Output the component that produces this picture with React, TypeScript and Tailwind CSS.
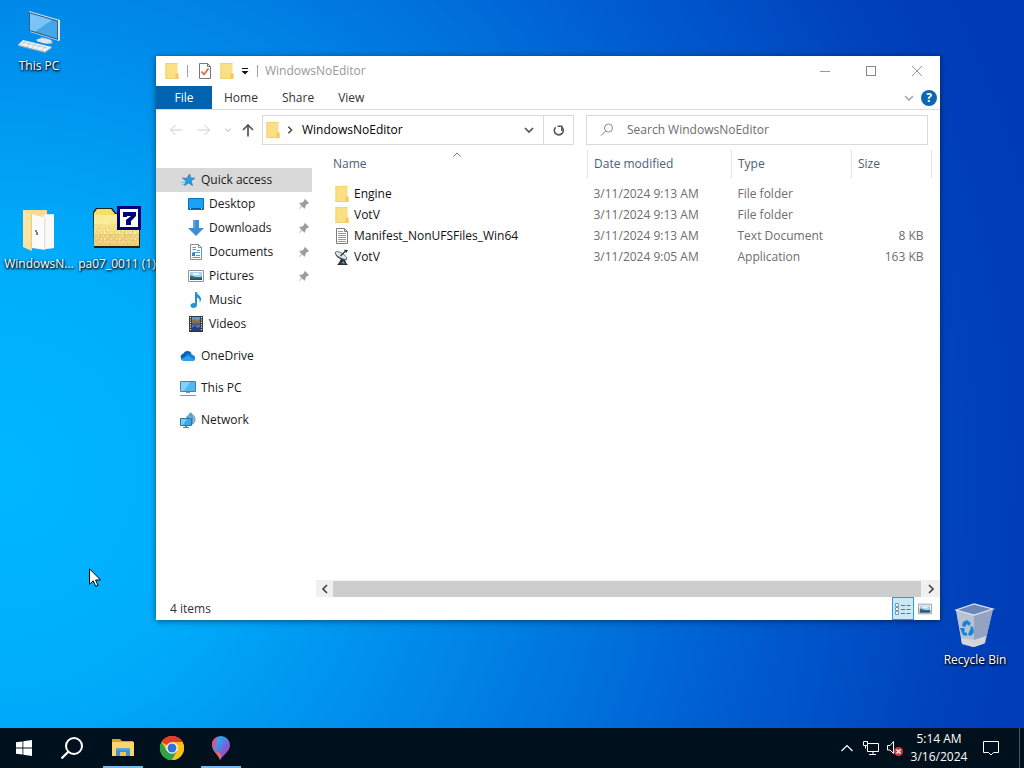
import React, { useState } from 'react';

interface IconProps {
  className?: string;
}

interface NavItem {
  label: string;
  Icon: React.FC<IconProps>;
  pinned?: boolean;
}

interface FileRow {
  name: string;
  modified: string;
  type: string;
  size: string;
  Icon: React.FC<IconProps>;
}

/* ---------- Small icons ---------- */

const FolderIcon: React.FC<IconProps> = ({ className = 'size-4' }) => (
  <svg viewBox="0 0 16 16" className={className} aria-hidden="true">
    <path d="M1.500 0h12v10l1 1v5h-13z" fill="#fadf83" />
    <path d="M1.500 0h12v1h-12z" fill="#f5d36e" />
    <path d="M1.500 0h1v16h-1z" fill="#f2cf70" />
    <path d="M11.500 10.500h2l1 1V16h-3z" fill="#f2c95a" />
    <path d="M1.500 15h13v1h-13z" fill="#f3d06d" />
  </svg>
);

const PropertiesIcon: React.FC<IconProps> = ({ className = 'size-4' }) => (
  <svg viewBox="0 0 16 16" className={className} fill="none" aria-hidden="true">
    <path d="M2.500.5h8l3 3v12h-11z" fill="#fff" stroke="#777" />
    <path d="M10.500.5v3h3" stroke="#777" />
    <path d="m4.500 8.500 2.500 3 4.500-6" stroke="#d9683c" strokeWidth="1.700" />
  </svg>
);

const TextFileIcon: React.FC<IconProps> = ({ className = 'size-4' }) => (
  <svg viewBox="0 0 16 16" className={className} fill="none" aria-hidden="true">
    <path d="M2.500.5h8l3 3v12h-11z" fill="#fdfdfd" stroke="#7d7d7d" />
    <path d="M10.500.5v3h3" stroke="#7d7d7d" />
    <path d="M4 3.500h5M4 5.500h8M4 7.500h8M4 9.500h8M4 11.500h8M4 13.500h8" stroke="#9b9b9b" />
  </svg>
);

const DishIcon: React.FC<IconProps> = ({ className = 'size-4' }) => (
  <svg viewBox="0 0 16 16" className={className} aria-hidden="true">
    <path d="M7.500 8 5.500 13 3 16h11l-1.800-2-1.700-5z" fill="#26333f" />
    <path d="M1 3.500C1.500 8 6 11.500 13 10.500L12 8z" fill="#2b3a47" />
    <ellipse cx="7" cy="6.500" rx="6.600" ry="2.400" transform="rotate(30 7 6.500)" fill="#e1e7eb" stroke="#4a5b69" strokeWidth=".8" />
    <path d="M6.500 7 11.500 2" stroke="#22303d" strokeWidth="1.200" />
    <path d="M10 .8 14 1l-1.800 3z" fill="#22303d" />
    <path d="m7.500 14.500 1.800-2.500 1.700 2.500z" fill="#8898a5" />
  </svg>
);

const StarIcon: React.FC<IconProps> = ({ className = 'size-4' }) => (
  <svg viewBox="0 0 16 16" className={className} aria-hidden="true">
    <path d="m9.600 2 1 4 4.200.2-3.600 2.600 1.200 4.700-3.700-2.600-4.200 2.600 1.700-4.500-3.400-2.600 4.300-.2z" fill="#2f9be2" stroke="#1f7fc4" strokeWidth=".8" />
    <path d="M1 10.500h4M2 12.500h2M1.500 5.500h3" stroke="#79bce9" />
  </svg>
);

const DesktopIcon: React.FC<IconProps> = ({ className = 'size-4' }) => (
  <svg viewBox="0 0 16 16" className={className} aria-hidden="true">
    <path d="M.5 2.500h15v11H.5z" fill="#18a2f8" stroke="#0c6cb4" />
    <path d="M1 12h14v1H1z" fill="#0a5a9a" />
    <path d="M2 12h1v1H2zM13 12h1v1h-1z" fill="#bfe3fa" />
  </svg>
);

const DownloadsIcon: React.FC<IconProps> = ({ className = 'size-4' }) => (
  <svg viewBox="0 0 16 16" className={className} aria-hidden="true">
    <path d="M5 0h6v8h5l-8 8-8-8h5z" fill="#3a8fd8" />
    <path d="M5 0h2v8H5z" fill="#5aa5e2" />
  </svg>
);

const DocumentsIcon: React.FC<IconProps> = ({ className = 'size-4' }) => (
  <svg viewBox="0 0 16 16" className={className} fill="none" aria-hidden="true">
    <path d="M2.500.5h8l3 3v12h-11z" fill="#fdfdfd" stroke="#878f96" />
    <path d="M10.500.5v3h3" stroke="#878f96" />
    <path d="M4.500 3.500H8M4.500 5.500H8M9 6.500h3M4.500 8.500H12M4.500 10.500H7M8 11.500h4M4.500 13.500H12" stroke="#4a9fd6" />
    <path d="M4 9h3v3H4z" fill="#2f86c6" />
  </svg>
);

const PicturesIcon: React.FC<IconProps> = ({ className = 'size-4' }) => (
  <svg viewBox="0 0 16 16" className={className} aria-hidden="true">
    <path d="M.5 2.500h15v11H.5z" fill="#fff" stroke="#8d979e" />
    <path d="M2 4h12v8H2z" fill="#a9d4f0" />
    <path d="M2 7.500C4 7 6 9 9 9s4 0 5-.5V12H2z" fill="#3f6a78" />
    <path d="M2 10.500h12V12H2z" fill="#23506e" />
    <path d="M5 5h6v2H5z" fill="#e9f6fd" />
  </svg>
);

const MusicIcon: React.FC<IconProps> = ({ className = 'size-4' }) => (
  <svg viewBox="0 0 16 16" className={className} aria-hidden="true">
    <path d="M7 0h1.800c.3 3 4.700 3.800 4.200 7.500-.1 1.200-.8 2.300-1.600 3 .8-2.800-.2-4.200-2.400-5V13c0 1.800-1.700 3-3.600 3S2.500 15 2.500 13.600 4 11 5.600 11c.6 0 1 .1 1.400.3z" fill="#1f93da" />
  </svg>
);

const VideosIcon: React.FC<IconProps> = ({ className = 'size-4' }) => (
  <svg viewBox="0 0 16 16" className={className} aria-hidden="true">
    <path d="M1 0h14v16H1z" fill="#33363b" />
    <path d="M4 1h8v6.500H4z" fill="#6b93c4" />
    <path d="M4 8.500h8V15H4z" fill="#4a74c4" />
    <path d="m4 5 3-2 2 2 3-2v4.500H4z" fill="#8a6b3d" />
    <path d="m4 12 3-2.500 2 2.500 3-1v4H4z" fill="#2b3c78" />
    <path d="M2.500 1v14M13.500 1v14" stroke="#e4e4e4" strokeWidth="1.200" strokeDasharray="1.200 1.200" />
  </svg>
);

const OneDriveIcon: React.FC<IconProps> = ({ className = 'size-4' }) => (
  <svg viewBox="0 0 16 16" className={className} aria-hidden="true">
    <path d="M3.500 12.500a3.500 3.500 0 0 1-.3-6.800A4.800 4.800 0 0 1 11.500 5L6 12.500z" fill="#0b5fb4" />
    <path d="M5.500 7.500a5 5 0 0 1 7.300-.6A3.200 3.200 0 0 1 13 13H3.500z" fill="#1782d6" />
    <path d="M.8 11 8 7.500l6.500 4.700c-.5.5-1 .8-1.700.8H3.800A3.500 3.500 0 0 1 .8 11z" fill="#2aa3ea" />
  </svg>
);

const ComputerIcon: React.FC<IconProps> = ({ className = 'size-4' }) => (
  <svg viewBox="0 0 16 16" className={className} aria-hidden="true">
    <path d="M.5 1.500h15v10H.5z" fill="#4fb8f2" stroke="#3c86b6" />
    <path d="M1 2h9L4 11H1z" fill="#85d0f8" />
    <path d="M6 12h4v1H6z" fill="#7e95a5" />
    <path d="M0 15h16v1H0z" fill="#7f97a8" />
  </svg>
);

const NetworkIcon: React.FC<IconProps> = ({ className = 'size-4' }) => (
  <svg viewBox="0 0 16 16" className={className} aria-hidden="true">
    <path d="M6 5 11 0l1 2c2 .5 3.500 3 3.500 5.500S14 12 11.500 13z" fill="#5c9cc2" />
    <path d="M8 3.500c3 1 4 4 3 8M12 1.500c2 2 2.500 5 1.500 9" stroke="#a5cde3" fill="none" />
    <path d="M.5 6.500h11v7H.5z" fill="#38a8ea" stroke="#2678ac" />
    <path d="M1 7h6l-4 6H1z" fill="#7dcbf5" />
    <path d="M3 15h6v1H3zM5 14h2v1H5z" fill="#4b88ad" />
  </svg>
);

const PinIcon: React.FC<IconProps> = ({ className = 'size-3' }) => (
  <svg viewBox="0 0 12 12" className={className} aria-hidden="true">
    <path d="M7 1 11 5 10 6 9.300 5.700 7.500 7.800 7.300 10 6.500 10.800 4 8.200 1.200 11 .8 10.800 3.500 7.700 1.200 5.500 2 4.700 4.500 4.500 6.300 2.600 6 2z" fill="#999da1" />
  </svg>
);

const ChevronIcon: React.FC<IconProps> = ({ className = 'size-3' }) => (
  <svg viewBox="0 0 12 12" className={className} fill="none" stroke="currentColor" aria-hidden="true">
    <path d="m2 4 4 4 4-4" strokeWidth="1.700" />
  </svg>
);

const ArrowIcon: React.FC<IconProps> = ({ className = 'size-3.5' }) => (
  <svg viewBox="0 0 14 14" className={className} fill="none" stroke="currentColor" aria-hidden="true">
    <path d="M13.500 7H1.500M6.500 2l-5 5 5 5" />
  </svg>
);

/* ---------- Desktop icons ---------- */

const BigComputer = () => (
  <svg viewBox="0 0 48 48" className="size-12" aria-hidden="true">
    <path d="m26 29 10 3 2 3c-3 2-9 1-12-1z" fill="#b3bfc9" />
    <path d="M21 32c4-3 13-2 16 1-2 3-12 3-16-1z" fill="#dde3e8" />
    <path d="m14 3 31 9v20l-1 1-29-9z" fill="#dfe6ea" />
    <path d="m14 4 29 8.500v19.500L14 23z" fill="#2d628a" />
    <path d="m15 5.500 27 8v17L15 22z" fill="#45a6ea" />
    <path d="m15 5.500 22 6.500-17 11.500-5-1.500z" fill="#7cc4f6" />
    <path d="m8 32 29 7-7 5-27-7z" fill="#eef2f5" />
    <path d="m3 37 27 7 7-5v1l-7 5-27-7z" fill="#9aa6af" />
    <path d="m7 34 25 6M11 33l-5 4M16 34l-5 5M21 35l-5 6M26 36l-5 6M31 38l-5 5" stroke="#b7c2ca" strokeWidth=".8" />
  </svg>
);

const OpenFolder = () => (
  <svg viewBox="0 0 48 48" className="size-12" aria-hidden="true">
    <path d="M8 4h24v36H8z" fill="#f5da90" />
    <path d="m27 9 12-1v34l-12 1z" fill="#eeeeec" />
    <path d="m30 8 9 1v33l-9 1z" fill="#f9f9f7" />
    <path d="m17 8 13 4v32l-13-2z" fill="#f4f4f2" />
    <path d="m17 8 12 4v31l-12-2z" fill="#fbfbf9" />
    <path d="M29.500 12h.8v32h-.8z" fill="#d6d6d3" />
    <path d="M8 4 17 8v37l-9-4z" fill="#fbe3a2" />
    <path d="M16.300 8h.7v37l-.7-.4z" fill="#e0c070" />
    <path d="M20 24h2v2h1v3h-2v-3h-1z" fill="#7d7d7d" />
  </svg>
);

const SevenFolder = () => (
  <svg viewBox="0 0 48 48" className="size-12" aria-hidden="true">
    <path d="m0 6 3-4h16l4 5h24v35H1z" fill="#1d2410" />
    <path d="M1 7 4 3h14l4 5h24v32H1z" fill="#f3df70" />
    <path d="M1 9h45v9H1z" fill="#faeb96" />
    <path d="M1 18h45v10H1z" fill="#f5df85" />
    <path d="M1 28h45v12H1z" fill="#eecd78" />
    <path
      d="M3 15h40M5 18h40M2 21h42M6 24h40M3 27h42M5 30h40M3 33h41M6 36h39"
      stroke="#fff6cc"
      strokeDasharray="1 4 1 2 2 5"
    />
    <path d="M6 22h38M3 26h41M7 29h37M4 34h40M6 38h38" stroke="#d9ab52" strokeDasharray="1 5 1 3 1 7" />
    <path d="M24 0h24v24H24z" fill="#000078" />
    <path d="M27 3h18v18H27z" fill="#fff" />
    <path d="M30 6h13v4l-5 5v4h-5v-5l5-4h-4v1h-4z" fill="#000078" />
  </svg>
);

const RecycleBin = () => (
  <svg viewBox="0 0 48 48" className="size-12" aria-hidden="true">
    <path d="m5 8 6 34 11 3 12-4 8-34-18-5z" fill="#a3b1c8" />
    <path d="m5 8 18 5 1 32-2 0-11-4z" fill="#b7c2d2" />
    <path d="m23 13 19-6-8 34-11 4z" fill="#94a3c0" />
    <path d="m5 8 18-6 19 5-19 6z" fill="#6f87b6" />
    <path d="m5 8 18-6 19 5-19 6z" fill="none" stroke="#dde5ee" strokeWidth="1.200" />
    <path d="m10 36 13 2 12-4-1.500 7.500L23 45l-12-3z" fill="#d3d7dc" />
    <path d="m12 20 4-2 4 3-2 3-2-2-2 3-3-1zM9 26h4l1 2-1 2 3 1v3l-4-1zM18 30l2-4-1-2 3 1 1 5-3 4-3-1z" fill="#1784d8" />
  </svg>
);

const DesktopShortcut: React.FC<{ label: string; className: string; children: React.ReactNode }> = ({
  label,
  className,
  children
}) => (
  <button
    type="button"
    className={`absolute flex w-[76px] flex-col items-center gap-0.5 leading-4 whitespace-nowrap text-white [text-shadow:1px_1px_2px_#000,0_1px_3px_#000] ${className}`}
  >
    {children}
    <span>{label}</span>
  </button>
);

/* ---------- Data ---------- */

const quickAccess: NavItem[] = [
  { label: 'Desktop', Icon: DesktopIcon, pinned: true },
  { label: 'Downloads', Icon: DownloadsIcon, pinned: true },
  { label: 'Documents', Icon: DocumentsIcon, pinned: true },
  { label: 'Pictures', Icon: PicturesIcon, pinned: true },
  { label: 'Music', Icon: MusicIcon },
  { label: 'Videos', Icon: VideosIcon }
];

const roots: NavItem[] = [
  { label: 'OneDrive', Icon: OneDriveIcon },
  { label: 'This PC', Icon: ComputerIcon },
  { label: 'Network', Icon: NetworkIcon }
];

const files: FileRow[] = [
  { name: 'Engine', modified: '3/11/2024 9:13 AM', type: 'File folder', size: '', Icon: FolderIcon },
  { name: 'VotV', modified: '3/11/2024 9:13 AM', type: 'File folder', size: '', Icon: FolderIcon },
  { name: 'Manifest_NonUFSFiles_Win64', modified: '3/11/2024 9:13 AM', type: 'Text Document', size: '8 KB', Icon: TextFileIcon },
  { name: 'VotV', modified: '3/11/2024 9:05 AM', type: 'Application', size: '163 KB', Icon: DishIcon }
];

/* ---------- Explorer window ---------- */

const TitleBar = () => (
  <div className="flex h-[30px] items-center">
    <div className="flex flex-1 items-center pl-2">
      <FolderIcon />
      <span className="ml-[7px] h-3 w-px bg-gray-400" />
      <button type="button" aria-label="Properties" className="ml-[9px]">
        <PropertiesIcon />
      </button>
      <button type="button" aria-label="New folder" className="ml-1.5">
        <FolderIcon />
      </button>
      <button type="button" aria-label="Customize Quick Access Toolbar" className="ml-1.5">
        <svg viewBox="0 0 8 8" className="size-2" aria-hidden="true">
          <path d="M1 1h6v1H1zM.5 4h7L4 7.500z" fill="#111" />
        </svg>
      </button>
      <span className="ml-2 h-3 w-px bg-gray-400" />
      <h1 className="ml-[7px] text-[#999]">WindowsNoEditor</h1>
    </div>
    <button type="button" aria-label="Minimize" className="flex h-full w-[46px] items-center justify-center">
      <span className="h-px w-2.5 bg-[#999]" />
    </button>
    <button type="button" aria-label="Maximize" className="flex h-full w-[46px] items-center justify-center">
      <span className="size-2.5 border border-[#888]" />
    </button>
    <button type="button" aria-label="Close" className="flex h-full w-[46px] items-center justify-center">
      <svg viewBox="0 0 12 12" className="size-3" aria-hidden="true">
        <path d="m1 1 10 10M11 1 1 11" stroke="#999" />
      </svg>
    </button>
  </div>
);

const RibbonTabs = () => (
  <div className="flex h-6 items-stretch border-b border-[#dadbdc] text-[#333]">
    <button type="button" className="w-14 bg-[#0063b1] text-white">File</button>
    <button type="button" className="px-3">Home</button>
    <button type="button" className="px-3">Share</button>
    <button type="button" className="px-3">View</button>
    <div className="flex flex-1 items-center justify-end gap-1.5 pr-[3px]">
      <button type="button" aria-label="Expand the Ribbon" className="text-[#aaa]">
        <ChevronIcon />
      </button>
      <button
        type="button"
        aria-label="Help"
        className="flex size-4 items-center justify-center rounded-full bg-[#0b66b5] font-bold text-white"
      >
        ?
      </button>
    </div>
  </div>
);

const AddressRow = () => {
  const [query, setQuery] = useState('');

  return (
    <div className="flex h-10 items-center px-3">
      <button type="button" aria-label="Back" className="flex w-4 justify-center text-[#ccc]">
        <ArrowIcon />
      </button>
      <button type="button" aria-label="Forward" className="ml-3 flex w-4 justify-center text-[#ccc]">
        <ArrowIcon className="size-3.5 rotate-180" />
      </button>
      <button type="button" aria-label="Recent locations" className="ml-2 flex w-4 justify-center text-[#ccc]">
        <ChevronIcon className="size-2" />
      </button>
      <button type="button" aria-label="Up" className="ml-1 flex w-4 justify-center text-[#555]">
        <svg viewBox="0 0 14 14" className="size-3.5" fill="none" stroke="currentColor" aria-hidden="true">
          <path d="M7 13.500V2M2 7l5-5 5 5" strokeWidth="1.700" />
        </svg>
      </button>
      <div className="ml-1.5 flex h-[30px] flex-1 items-center border border-[#d9d9d9] pl-0.5">
        <FolderIcon />
        <ChevronIcon className="ml-1 size-2.5 -rotate-90 text-[#444]" />
        <span className="ml-[7px] flex-1 text-black">WindowsNoEditor</span>
        <button type="button" aria-label="Previous locations" className="mr-2 text-[#555]">
          <ChevronIcon />
        </button>
        <button
          type="button"
          aria-label="Refresh"
          className="flex w-[30px] items-center justify-center self-stretch border-l border-[#d9d9d9]"
        >
          <svg viewBox="0 0 14 14" className="size-3.5" fill="none" stroke="#555" aria-hidden="true">
            <path d="M3.600 4.200A4.500 4.500 0 1 0 9.800 4" strokeWidth="1.600" />
            <path d="M9.800 8V3.200H5.500" strokeWidth="1.400" />
          </svg>
        </button>
      </div>
      <label className="ml-3 flex h-[30px] w-[342px] items-center gap-[13px] border border-[#d9d9d9] pl-[13px]">
        <svg viewBox="0 0 14 14" className="size-3.5" fill="none" stroke="#888" aria-hidden="true">
          <circle cx="8.500" cy="5" r="4" />
          <path d="M5.700 8 1 12.700" />
        </svg>
        <input
          type="text"
          aria-label="Search"
          value={query}
          onChange={(e) => setQuery(e.target.value)}
          placeholder="Search WindowsNoEditor"
          className="min-w-0 flex-1 outline-none placeholder:text-[#6d6d6d]"
        />
      </label>
    </div>
  );
};

const NavPane = () => (
  <nav className="w-40 shrink-0 pt-[18px] pr-1 text-[#1a1a1a]">
    <a href="#quick" className="flex h-6 items-center gap-[5px] bg-[#d9d9d9] pl-6">
      <StarIcon />
      Quick access
    </a>
    {quickAccess.map(({ label, Icon, pinned }) => (
      <a key={label} href="#quick" className="flex h-6 items-center gap-[5px] pl-8">
        <Icon />
        <span className="flex-1">{label}</span>
        {pinned && <PinIcon className="mr-0.5 size-3" />}
      </a>
    ))}
    {roots.map(({ label, Icon }) => (
      <a key={label} href="#root" className="mt-2 flex h-6 items-center gap-[5px] pl-6">
        <Icon />
        {label}
      </a>
    ))}
  </nav>
);

const FileTable = () => (
  <div className="relative flex-1 pr-2">
    <svg
      viewBox="0 0 10 8"
      className="absolute left-[136px] h-2 w-2.5"
      fill="none"
      stroke="#777"
      aria-hidden="true"
    >
      <path d="m1.500 6.500 3.500-3.500 3.500 3.500" />
    </svg>
    <table className="w-full table-fixed border-collapse text-[#6d6d6d]">
      <colgroup>
        <col />
        <col className="w-36" />
        <col className="w-[120px]" />
        <col className="w-20" />
      </colgroup>
      <thead className="text-left text-[#4c607a]">
        <tr className="h-7 leading-7">
          <th scope="col" className="border-r border-[#e5e5e5] pl-[17px] font-normal">Name</th>
          <th scope="col" className="border-r border-[#e5e5e5] pl-1.5 font-normal">Date modified</th>
          <th scope="col" className="border-r border-[#e5e5e5] pl-1.5 font-normal">Type</th>
          <th scope="col" className="border-r border-[#e5e5e5] pl-1.5 font-normal">Size</th>
        </tr>
      </thead>
      <tbody className="before:block before:h-[5px]">
        {files.map(({ name, modified, type, size, Icon }) => (
          <tr key={name + type} className="h-[21px] leading-4">
            <td className="pl-[18px] text-[#111]">
              <span className="flex items-center gap-1">
                <Icon />
                {name}
              </span>
            </td>
            <td className="pl-1.5">{modified}</td>
            <td className="pl-1.5">{type}</td>
            <td className="pr-2 text-right">{size}</td>
          </tr>
        ))}
      </tbody>
    </table>
  </div>
);

const HorizontalScrollbar = () => (
  <div className="flex h-[17px] items-center bg-[#f0f0f0] text-[#444]">
    <button type="button" aria-label="Scroll left" className="flex w-[17px] justify-center">
      <ChevronIcon className="size-3 rotate-90" />
    </button>
    <div className="h-4 flex-1 bg-[#cdcdcd]" />
    <button type="button" aria-label="Scroll right" className="flex w-[19px] justify-center">
      <ChevronIcon className="size-3 -rotate-90" />
    </button>
  </div>
);

const StatusBar = () => (
  <div className="flex h-[23px] items-center justify-between pr-2 pl-3.5 text-[#333]">
    <span>{files.length} items</span>
    <div className="flex items-center gap-1 self-stretch">
      <button
        type="button"
        aria-label="Details"
        className="flex w-[22px] items-center justify-center self-stretch border border-[#26a0da] bg-[#cbe8f6]"
      >
        <svg viewBox="0 0 16 14" className="h-3.5 w-4" fill="none" aria-hidden="true">
          <path d="M.5 1.500h3v3h-3zM.5 5.500h3v3h-3zM.5 9.500h3v3h-3z" fill="#fff" stroke="#7a98a8" />
          <path d="M6 3.500h4M11.500 3.500h4M6 7.500h4M11.500 7.500h4M6 11.500h4M11.500 11.500h4" stroke="#5d7788" />
        </svg>
      </button>
      <button type="button" aria-label="Large icons">
        <PicturesIcon className="size-3.5" />
      </button>
    </div>
  </div>
);

const ExplorerWindow = () => (
  <main className="absolute top-14 right-[84px] bottom-[108px] left-[156px] flex flex-col bg-white shadow-[0_1px_6px_rgba(0,0,0,0.5)]">
    <TitleBar />
    <RibbonTabs />
    <AddressRow />
    <div className="flex min-h-0 flex-1">
      <NavPane />
      <div className="flex min-w-0 flex-1 flex-col">
        <FileTable />
        <HorizontalScrollbar />
      </div>
    </div>
    <StatusBar />
  </main>
);

/* ---------- Taskbar ---------- */

const TaskButton: React.FC<{ label: string; open?: boolean; children: React.ReactNode }> = ({ label, open, children }) => (
  <button
    type="button"
    aria-label={label}
    className="relative flex w-12 items-center justify-center"
  >
    {children}
    {open && <span className="absolute bottom-0 left-1 h-0.5 w-10 bg-[#76b9ed]" />}
  </button>
);

const Taskbar = () => (
  <footer className="flex h-10 items-stretch bg-[#00101c] text-white">
    <TaskButton label="Start">
      <svg viewBox="0 0 16 16" className="size-4" fill="#fff" aria-hidden="true">
        <path d="m0 2.300 6.500-.9v6.200H0zM7.300 1.300 16 0v7.600H7.300zM0 8.400h6.500v6.200L0 13.700zM7.300 8.400H16V16l-8.700-1.200z" />
      </svg>
    </TaskButton>
    <TaskButton label="Search">
      <svg viewBox="0 0 24 24" className="size-6" fill="none" stroke="#fff" strokeWidth="2" aria-hidden="true">
        <circle cx="14" cy="10" r="8" />
        <path d="M8.300 15.700 1.500 22.500" strokeWidth="2.300" />
      </svg>
    </TaskButton>
    <div className="ml-[3px] flex gap-px">
      <TaskButton label="File Explorer" open>
        <svg viewBox="0 0 22 20" className="h-5 w-[22px]" aria-hidden="true">
          <path d="M0 1h8l2 2h11v4H0z" fill="#e0a021" />
          <path d="M0 4h22v14H0z" fill="#fbd668" />
          <path d="M4 10h14v8h-4v-4H8v4H4z" fill="#3f93cf" />
          <path d="M4 10h14v2H4z" fill="#5aa9dd" />
          <path d="M8 14h6v4H8z" fill="#f1c24c" />
        </svg>
      </TaskButton>
      <TaskButton label="Google Chrome">
        <svg viewBox="0 0 24 24" className="size-6" aria-hidden="true">
          <circle cx="12" cy="12" r="12" fill="#fbc116" />
          <path d="M12 12 1.600 6A12 12 0 0 1 22.400 6H12z" fill="#e33b2e" />
          <path d="M1.600 6A12 12 0 0 0 12 24l5.200-9L12 12 6.800 15z" fill="#2ba24c" />
          <path d="M22.400 6A12 12 0 0 1 12 24l5.200-9a6 6 0 0 0 0-6L12 6z" fill="#fbc116" />
          <circle cx="12" cy="12" r="5.800" fill="#fff" />
          <circle cx="12" cy="12" r="4.500" fill="#2f73e0" />
        </svg>
      </TaskButton>
      <TaskButton label="Paint 3D" open>
        <svg viewBox="0 0 20 24" className="h-6 w-5" aria-hidden="true">
          <defs>
            <linearGradient id="drop" x1="0" y1="0" x2="1" y2="1">
              <stop offset="0" stopColor="#28c3f2" />
              <stop offset=".4" stopColor="#3f8fe6" />
              <stop offset=".65" stopColor="#8b56cf" />
              <stop offset="1" stopColor="#e0408f" />
            </linearGradient>
            <linearGradient id="tip" x1="0" y1="0" x2="0" y2="1">
              <stop offset="0" stopColor="#d4408f" />
              <stop offset="1" stopColor="#f98a3c" />
            </linearGradient>
          </defs>
          <path d="M10 0a9 9 0 0 1 9 9c0 6-6 9-10 15-1-5-8-9-8-15a9 9 0 0 1 9-9z" fill="url(#drop)" />
          <path d="M1.300 11C3 16 8 15 10 18l-1 6C8 19 2 16 1.300 11z" fill="url(#tip)" />
          <path d="M1 8c0-4 3-6.500 6-7.500C5 4 6 9 4 13 2 12 1 10 1 8z" fill="#d6539c" />
        </svg>
      </TaskButton>
    </div>
    <div className="ml-auto flex items-stretch">
      <button type="button" aria-label="Show hidden icons" className="flex w-6 items-center justify-center">
        <svg viewBox="0 0 12 12" className="size-3" fill="none" stroke="#fff" aria-hidden="true">
          <path d="m.5 9 5.500-5.500L11.500 9" strokeWidth="1.200" />
        </svg>
      </button>
      <button type="button" aria-label="Network" className="flex w-6 items-center justify-center">
        <svg viewBox="0 0 16 16" className="size-4" fill="none" stroke="#fff" aria-hidden="true">
          <path d="M5 3.500h10.500v8h-11V6M10 11.500v3M6 14.500h7" />
          <path d="M.5 1.500h4v4h-4zM2.500 5.500v3" />
        </svg>
      </button>
      <button type="button" aria-label="Volume" className="flex w-6 items-center justify-center">
        <svg viewBox="0 0 16 16" className="size-4" fill="none" aria-hidden="true">
          <path d="M.5 5.500h2.500l3.500-4v12l-3.500-3.500H.5z" stroke="#fff" />
          <circle cx="11.500" cy="11.500" r="4.500" fill="#d23b3b" />
          <path d="m9.500 9.500 4 4M13.500 9.500l-4 4" stroke="#fff" strokeWidth="1.200" />
        </svg>
      </button>
      <button type="button" className="ml-1 flex w-14 flex-col items-center justify-center leading-[18px]">
        <span>5:14 AM</span>
        <span>3/16/2024</span>
      </button>
      <button type="button" aria-label="Notifications" className="flex w-12 items-center justify-center">
        <svg viewBox="0 0 16 16" className="size-4" fill="none" stroke="#fff" aria-hidden="true">
          <path d="M.5 1.500h15v11h-5L8 15l-2.500-2.500h-5z" />
        </svg>
      </button>
      <button type="button" aria-label="Show desktop" className="ml-1 w-[5px] border-l border-gray-600" />
    </div>
  </footer>
);

const App = () => (
  <div className="flex h-screen flex-col overflow-hidden font-['Open_Sans','Noto_Sans',sans-serif] text-xs">
    <div className="relative flex-1 bg-[radial-gradient(ellipse_105%_150%_at_0%_65%,#00b7ff_0%,#00adfb_20%,#0084e6_46%,#005ed0_70%,#0042bc_90%,#003ab6_100%)]">
      <DesktopShortcut label="This PC" className="top-2 left-px">
        <BigComputer />
      </DesktopShortcut>
      <DesktopShortcut label="WindowsN..." className="top-[206px] left-px">
        <OpenFolder />
      </DesktopShortcut>
      <DesktopShortcut label="pa07_0011 (1)" className="top-[206px] left-[79px]">
        <SevenFolder />
      </DesktopShortcut>
      <DesktopShortcut label="Recycle Bin" className="right-[11px] bottom-[60px]">
        <RecycleBin />
      </DesktopShortcut>
      <ExplorerWindow />
      {/* Mouse pointer */}
      <svg viewBox="0 0 12 19" className="absolute top-[568px] left-[89px] h-[19px] w-3" aria-hidden="true">
        <path d="M.5.8v15.500l3.700-3.500 2.500 5.500 2.300-1-2.400-5.300h5z" fill="#fff" stroke="#000" />
      </svg>
    </div>
    <Taskbar />
  </div>
);

export default App;
